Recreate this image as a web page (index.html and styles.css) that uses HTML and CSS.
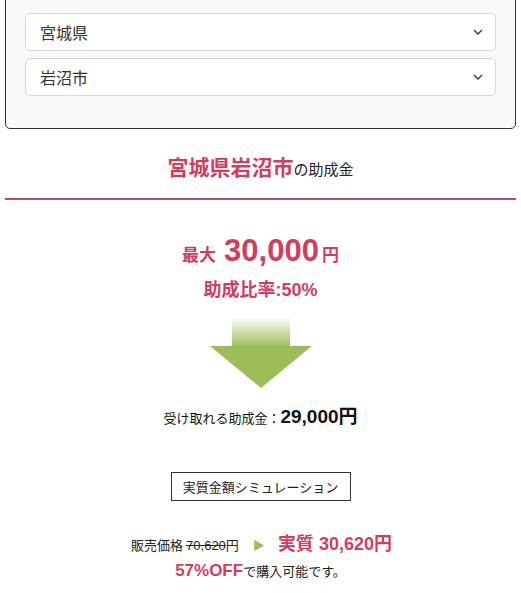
FILE: index.html
```html
<!DOCTYPE html>
<html lang="ja">
<head>
<meta charset="utf-8">
<link rel="stylesheet" href="styles.css">
</head>
<body>
<div class="card">
  <div class="select">
    <span>宮城県</span>
    <svg class="chev" width="10" height="6" viewBox="0 0 10 6"><path d="M1 1l4 4 4-4" fill="none" stroke="#343a40" stroke-width="1.4"/></svg>
  </div>
  <div class="select">
    <span>岩沼市</span>
    <svg class="chev" width="10" height="6" viewBox="0 0 10 6"><path d="M1 1l4 4 4-4" fill="none" stroke="#343a40" stroke-width="1.4"/></svg>
  </div>
</div>

<h2 class="title"><span class="red">宮城県岩沼市</span><span class="small">の助成金</span></h2>

<div class="result">
  <p class="max"><span class="lbl">最大</span><span class="big">30,000</span><span class="lbl">円</span></p>
  <p class="rate">助成比率:50%</p>
  <svg class="arrow" width="102" height="71" viewBox="0 0 102 71">
    <defs>
      <linearGradient id="g" x1="0" y1="0" x2="0" y2="1">
        <stop offset="0" stop-color="#9cbd5a" stop-opacity="0"/>
        <stop offset="1" stop-color="#9cbd5a"/>
      </linearGradient>
    </defs>
    <rect x="22" y="0" width="58" height="30" fill="url(#g)"/>
    <polygon points="0,29 102,29 51,71" fill="#9cbd5a"/>
  </svg>
  <p class="receive">受け取れる助成金：<span class="amt">29,000円</span></p>
  <div class="btn">実質金額シミュレーション</div>
  <p class="price"><span>販売価格</span><s class="orig">70,620</s><span>円</span><span class="tri">▶</span><span class="real">実質 30,620円</span></p>
  <p class="off"><span class="pct">57%OFF</span>で購入可能です。</p>
</div>
</body>
</html>
```
FILE: styles.css
```css
html, body {
  margin: 0;
  padding: 0;
  background: #fff;
}
body {
  font-family: "Liberation Sans", "Noto Sans CJK JP", sans-serif;
  color: #212529;
}
.card {
  margin: -17px 5px 0;
  padding: 29px 19px 32px;
  border: 1px solid #333;
  border-radius: 5px;
  background: #f9f9f9;
  display: flex;
  flex-direction: column;
  gap: 7px;
}
.select {
  height: 38px;
  box-sizing: border-box;
  border: 1px solid #d3d6da;
  border-radius: 5px;
  background: #fff;
  display: flex;
  align-items: center;
  justify-content: space-between;
  padding: 0 12px 0 14px;
  font-size: 16px;
  font-family: "Noto Sans CJK JP", sans-serif;
  color: #333;
}
.title {
  margin: 22px 5px 0;
  padding-bottom: 13px;
  border-bottom: 2px solid #b24f6c;
  text-align: center;
  font-weight: normal;
  line-height: 30px;
  font-size: 16px;
}
.red {
  color: #d33c5e;
  font-size: 21px;
  font-weight: bold;
  font-family: "Noto Sans CJK JP", sans-serif;
}
.small {
  font-size: 15px;
  color: #222;
  font-family: "Noto Sans CJK JP", sans-serif;
}
.result {
  display: flex;
  flex-direction: column;
  align-items: center;
  color: #d33c5e;
}
.result p {
  margin: 0;
}
.max {
  margin-top: 33px !important;
  font-weight: bold;
  line-height: 36px;
}
.lbl {
  font-size: 17px;
}
.big {
  font-size: 31px;
  margin: 0 3px 0 8px;
}
.rate {
  margin-top: 4px !important;
  font-size: 18px;
  font-weight: bold;
  line-height: 24px;
}
.arrow {
  margin-top: 15px;
  display: block;
}
.receive {
  margin-top: 17px !important;
  color: #111;
  font-size: 13px;
  line-height: 24px;
}
.amt {
  font-size: 19px;
  font-weight: bold;
}
.btn {
  margin-top: 41px;
  border: 1px solid #333;
  width: 180px;
  height: 29px;
  box-sizing: border-box;
  display: flex;
  align-items: center;
  justify-content: center;
  color: #222;
  font-size: 13px;
}
.price {
  margin-top: 31px !important;
  color: #222;
  font-size: 13px;
  line-height: 24px;
  padding-left: 2px;
}
.orig {
  margin-left: 3px;
}
.tri {
  color: #9cbd5a;
  font-size: 12px;
  margin: 0 13px 0 14px;
}
.real {
  color: #d33c5e;
  font-size: 18px;
  font-weight: bold;
}
.off {
  margin-top: 1px !important;
  color: #222;
  font-size: 13px;
  line-height: 24px;
}
.pct {
  color: #d33c5e;
  font-size: 17px;
  font-weight: bold;
}
```
